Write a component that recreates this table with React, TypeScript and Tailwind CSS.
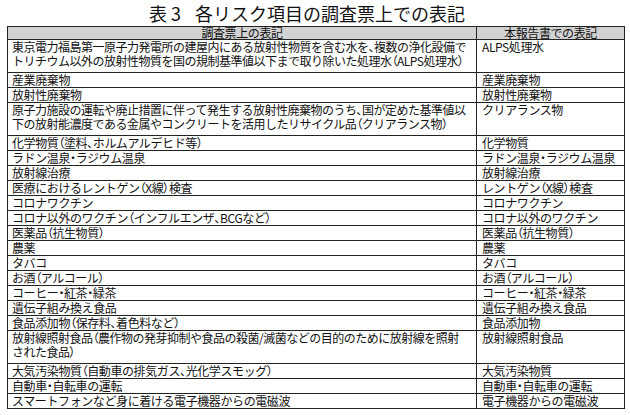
const rows: { left: string[]; right: string }[] = [
  {
    left: [
      "東京電力福島第一原子力発電所の建屋内にある放射性物質を含む水を、複数の浄化設備で",
      "トリチウム以外の放射性物質を国の規制基準値以下まで取り除いた処理水（ALPS処理水）",
    ],
    right: "ALPS処理水",
  },
  { left: ["産業廃棄物"], right: "産業廃棄物" },
  { left: ["放射性廃棄物"], right: "放射性廃棄物" },
  {
    left: [
      "原子力施設の運転や廃止措置に伴って発生する放射性廃棄物のうち、国が定めた基準値以",
      "下の放射能濃度である金属やコンクリートを活用したリサイクル品（クリアランス物）",
    ],
    right: "クリアランス物",
  },
  { left: ["化学物質（塗料、ホルムアルデヒド等）"], right: "化学物質" },
  { left: ["ラドン温泉・ラジウム温泉"], right: "ラドン温泉・ラジウム温泉" },
  { left: ["放射線治療"], right: "放射線治療" },
  { left: ["医療におけるレントゲン（X線）検査"], right: "レントゲン（X線）検査" },
  { left: ["コロナワクチン"], right: "コロナワクチン" },
  { left: ["コロナ以外のワクチン（インフルエンザ、BCGなど）"], right: "コロナ以外のワクチン" },
  { left: ["医薬品（抗生物質）"], right: "医薬品（抗生物質）" },
  { left: ["農薬"], right: "農薬" },
  { left: ["タバコ"], right: "タバコ" },
  { left: ["お酒（アルコール）"], right: "お酒（アルコール）" },
  { left: ["コーヒー・紅茶・緑茶"], right: "コーヒー・紅茶・緑茶" },
  { left: ["遺伝子組み換え食品"], right: "遺伝子組み換え食品" },
  { left: ["食品添加物（保存料、着色料など）"], right: "食品添加物" },
  {
    left: [
      "放射線照射食品（農作物の発芽抑制や食品の殺菌/滅菌などの目的のために放射線を照射",
      "された食品）",
    ],
    right: "放射線照射食品",
  },
  { left: ["大気汚染物質（自動車の排気ガス、光化学スモッグ）"], right: "大気汚染物質" },
  { left: ["自動車・自転車の運転"], right: "自動車・自転車の運転" },
  { left: ["スマートフォンなど身に着ける電子機器からの電磁波"], right: "電子機器からの電磁波" },
]

// punctuation is set proportionally, everything else full width
function Jp({ text }: { text: string }) {
  const parts = text.split(/([（）・、])/)
  return (
    <>
      {parts.map((p, i) =>
        /^[（）・、]$/.test(p) ? (
          <span key={i} className="[font-feature-settings:'palt']">{p}</span>
        ) : (
          p
        )
      )}
    </>
  )
}

export default function App() {
  return (
    <div className="w-[630px] h-[415px] bg-white text-[#111] font-['Noto_Sans_CJK_JP',sans-serif] overflow-hidden">
      <h1 className="h-[26px] text-center text-[18px] leading-[26px] pr-[16px] font-normal">
        表 3<span className="ml-[14px]">各リスク項目の調査票上での表記</span>
      </h1>
      <table className="ml-[7px] w-[618px] border-collapse border border-[#222] table-fixed text-[12px] tracking-[-0.4px]">
        <colgroup>
          <col className="w-[469px]" />
          <col />
        </colgroup>
        <thead>
          <tr className="bg-[#d2d2d2]">
            <th className="border border-[#222] font-normal leading-[12px] h-[13px] p-0">調査票上の表記</th>
            <th className="border border-[#222] font-normal leading-[12px] h-[13px] p-0">本報告書での表記</th>
          </tr>
        </thead>
        <tbody>
          {rows.map((r, i) => (
            <tr key={i}>
              <td className={`border border-[#222] align-top pl-[4px] pt-0 leading-[14px] whitespace-nowrap overflow-hidden ${r.left.length > 1 ? "pb-[4px] tracking-[-0.5px]" : "pb-0"}`}>
                {r.left.map((l, j) => (
                  <div key={j}>
                    <Jp text={l} />
                  </div>
                ))}
              </td>
              <td className="border border-[#222] align-top pl-[5px] py-0 leading-[14px] whitespace-nowrap overflow-hidden">
                <Jp text={r.right} />
              </td>
            </tr>
          ))}
        </tbody>
      </table>
    </div>
  )
}
